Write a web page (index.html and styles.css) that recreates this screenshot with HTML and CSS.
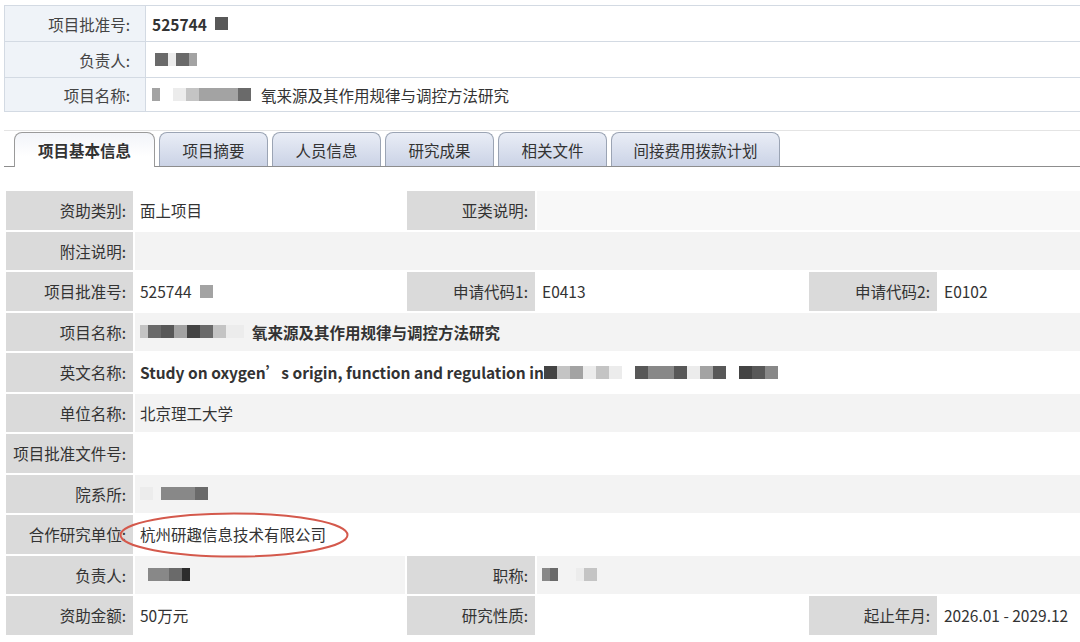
FILE: index.html
```html
<!DOCTYPE html>
<html lang="zh-CN">
<head>
<meta charset="utf-8">
<title>项目基本信息</title>
<link rel="stylesheet" href="styles.css">
</head>
<body>
<div class="info">
  <div class="info-row">
    <div class="info-label">项目批准号:</div>
    <div class="info-value"><b>525744</b><span class="mosaic ml8"><i class="m6"></i></span></div>
  </div>
  <div class="info-row">
    <div class="info-label">负责人:</div>
    <div class="info-value"><span class="mosaic ml3"><i class="m5"></i><i class="m1 narrow"></i><i class="m5"></i><i class="m3 narrow"></i></span></div>
  </div>
  <div class="info-row last">
    <div class="info-label">项目名称:</div>
    <div class="info-value"><span class="mosaic mr10"><i class="m3 narrow"></i><i class="m0"></i><i class="m1"></i><i class="m2"></i><i class="m3"></i><i class="m3"></i><i class="m3"></i><i class="m5"></i></span>氧来源及其作用规律与调控方法研究</div>
  </div>
</div>

<div class="tabs">
  <div class="tab active">项目基本信息</div>
  <div class="tab">项目摘要</div>
  <div class="tab">人员信息</div>
  <div class="tab">研究成果</div>
  <div class="tab">相关文件</div>
  <div class="tab">间接费用拨款计划</div>
</div>

<div class="grid">
  <div class="lbl">资助类别:</div>
  <div class="val w">面上项目</div>
  <div class="lbl">亚类说明:</div>
  <div class="val f span-rest2"></div>

  <div class="lbl">附注说明:</div>
  <div class="val g span-all"></div>

  <div class="lbl">项目批准号:</div>
  <div class="val w">525744<span class="mosaic ml8"><i class="m3"></i></span></div>
  <div class="lbl">申请代码1:</div>
  <div class="val w">E0413</div>
  <div class="lbl">申请代码2:</div>
  <div class="val w">E0102</div>

  <div class="lbl">项目名称:</div>
  <div class="val g span-all bold"><span class="mosaic mr8"><i class="m2 narrow"></i><i class="m5"></i><i class="m6"></i><i class="m3"></i><i class="m7"></i><i class="m5"></i><i class="m2"></i><i class="m1 wide"></i></span>氧来源及其作用规律与调控方法研究</div>

  <div class="lbl">英文名称:</div>
  <div class="val w span-all bold">Study on oxygen’s origin, function and regulation in<span class="mosaic"><i class="m7"></i><i class="m2"></i><i class="m3"></i><i class="m1"></i><i class="m2"></i><i class="m1"></i><i class="m0"></i><i class="m6"></i><i class="m4"></i><i class="m4"></i><i class="m6"></i><i class="m1"></i><i class="m3"></i><i class="m6"></i><i class="m0"></i><i class="m7"></i><i class="m6"></i><i class="m4"></i></span></div>

  <div class="lbl">单位名称:</div>
  <div class="val g span-all">北京理工大学</div>

  <div class="lbl">项目批准文件号:</div>
  <div class="val w span-all"></div>

  <div class="lbl">院系所:</div>
  <div class="val g span-all"><span class="mosaic"><i class="m1"></i><i class="m0 narrow"></i><i class="m4"></i><i class="m4"></i><i class="m4 narrow"></i><i class="m5"></i></span></div>

  <div class="lbl">合作研究单位:</div>
  <div class="val w span-all">杭州研趣信息技术有限公司</div>

  <div class="lbl">负责人:</div>
  <div class="val g"><span class="mosaic ml8"><i class="m4"></i><i class="m4 narrow"></i><i class="m5"></i><i class="m8 narrow"></i></span></div>
  <div class="lbl">职称:</div>
  <div class="val g span-rest2"><span class="mosaic"><i class="m4 narrow"></i><i class="m5 narrow"></i><i class="m0 gap"></i><i class="m1 narrow"></i><i class="m2"></i></span></div>

  <div class="lbl">资助金额:</div>
  <div class="val w">50万元</div>
  <div class="lbl">研究性质:</div>
  <div class="val w"></div>
  <div class="lbl">起止年月:</div>
  <div class="val w">2026.01 - 2029.12</div>
</div>

<svg class="mark" width="236" height="50" viewBox="0 0 236 50" aria-hidden="true">
  <ellipse cx="117" cy="24" rx="113.5" ry="21.5" fill="none" stroke="#d4594c" stroke-width="2"/>
</svg>
</body>
</html>
```

FILE: styles.css
```css
html, body {
  margin: 0;
  padding: 0;
  background: #ffffff;
}

body {
  position: relative;
  width: 1080px;
  height: 642px;
  overflow: hidden;
  font-family: "Noto Sans CJK SC", "Noto Sans", sans-serif;
  font-size: 15.5px;
  color: #333333;
}

/* ---------- top info table ---------- */
.info {
  margin: 5px 0 0 4px;
  border-top: 1px solid #d3dae3;
  border-left: 1px solid #d3dae3;
}

.info-row {
  display: flex;
  height: 35px;
  border-bottom: 1px solid #d3dae3;
}

.info-row.last {
  height: 33px;
}

.info-label {
  width: 125px;
  flex: none;
  padding-right: 15px;
  background: #eff3f8;
  border-right: 1px solid #d3dae3;
  display: flex;
  align-items: center;
  justify-content: flex-end;
  color: #444;
}

.info-value {
  flex: 1;
  padding-left: 6px;
  display: flex;
  align-items: center;
  background: #ffffff;
}

.info-value b {
  font-weight: 700;
  color: #333;
}

/* ---------- mosaic (redacted pixels) ---------- */
.mosaic {
  display: inline-flex;
  align-items: center;
  height: 13px;
  vertical-align: middle;
}

.mosaic i {
  display: inline-block;
  width: 13px;
  height: 13px;
}

.mosaic i.narrow { width: 8px; }
.mosaic i.wide { width: 18px; }
.mosaic i.gap { width: 18px; }

.m0 { background: transparent; }
.m1 { background: #ececec; }
.m2 { background: #c4c4c4; }
.m3 { background: #a3a3a3; }
.m4 { background: #888888; }
.m5 { background: #6a6a6a; }
.m6 { background: #585858; }
.m7 { background: #444444; }
.m8 { background: #2c2c2c; }

.ml3 { margin-left: 3px; }
.ml8 { margin-left: 8px; }
.mr8 { margin-right: 8px; }
.mr10 { margin-right: 10px; }

/* ---------- tabs ---------- */
.tabs {
  margin: 18px 0 0 4px;
  height: 35px;
  display: flex;
  align-items: flex-end;
  gap: 4px;
  padding-left: 10px;
  border-top: 1px solid #e4e4e4;
  border-bottom: 1px solid #8d8d8d;
}

.tab {
  height: 34px;
  min-width: 109px;
  box-sizing: border-box;
  padding: 0 21.5px;
  display: flex;
  align-items: center;
  justify-content: center;
  border: 1px solid #9ba4b4;
  border-bottom: none;
  border-radius: 8px 8px 0 0;
  background: linear-gradient(#e9edf6, #cbd3e6);
  color: #333;
  white-space: nowrap;
}

.tab.active {
  height: 35px;
  padding: 0 23px;
  margin-bottom: -1px;
  background: linear-gradient(#f2f4f9, #ffffff 70%);
  font-weight: 700;
  border-color: #9a9a9a;
}

/* ---------- main grid ---------- */
.grid {
  margin: 24px 0 0 6px;
  display: grid;
  grid-template-columns: 127px 270px 128px 270px 128px 1fr;
  grid-auto-rows: 38.5px;
  gap: 2px;
}

.lbl {
  background: #dadada;
  display: flex;
  align-items: center;
  justify-content: flex-end;
  padding-right: 7px;
  white-space: nowrap;
  color: #333;
}

.val {
  display: flex;
  align-items: center;
  padding-left: 5px;
  white-space: nowrap;
  color: #333;
}

.val.w { background: #ffffff; }
.val.f { background: #f8f8f8; }
.val.g { background: #f3f3f3; }

.val.bold { font-weight: 700; }

.span-all { grid-column: 2 / -1; }
.span-rest2 { grid-column: 4 / -1; }

/* ---------- annotation ---------- */
.mark {
  position: absolute;
  left: 117px;
  top: 511px;
}
```
